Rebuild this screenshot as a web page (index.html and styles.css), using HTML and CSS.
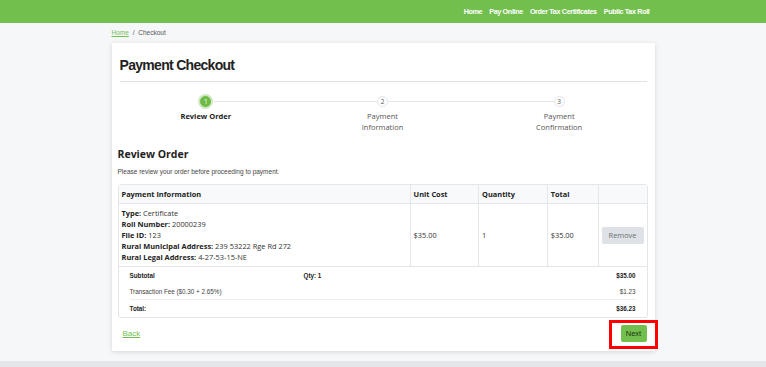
FILE: index.html
```html
<!DOCTYPE html>
<html lang="en">
<head>
  <meta charset="UTF-8" />
  <meta name="viewport" content="width=device-width, initial-scale=1.0"/>
  <title>Payment Checkout</title>
  <link rel="stylesheet" href="styles.css">
</head>
<body>

  <header class="topbar">
    <nav class="wrap topnav">
      <a href="#">Home</a>
      <a href="#">Pay Online</a>
      <a href="#">Order Tax Certificates</a>
      <a href="#">Public Tax Roll</a>
    </nav>
  </header>

  <main class="wrap">
    <div class="crumbs"><a href="#">Home</a> <span>/</span> Checkout</div>

    <section class="card">
      <h1>Payment Checkout</h1>

      <ol class="steps">
        <li class="step active"><span class="dot">1</span><span class="label">Review Order</span></li>
        <li class="step"><span class="dot">2</span><span class="label">Payment<br>Information</span></li>
        <li class="step"><span class="dot">3</span><span class="label">Payment<br>Confirmation</span></li>
      </ol>

      <h2>Review Order</h2>
      <p class="note">Please review your order before proceeding to payment.</p>

      <div class="order">
        <table class="items">
          <thead>
            <tr>
              <th class="col-info">Payment Information</th>
              <th class="col-cost">Unit Cost</th>
              <th class="col-qty">Quantity</th>
              <th class="col-total">Total</th>
              <th class="col-act"></th>
            </tr>
          </thead>
          <tbody>
            <tr>
              <td class="details">
                <b>Type:</b> Certificate<br>
                <b>Roll Number:</b> 20000239<br>
                <b>File ID:</b> 123<br>
                <b>Rural Municipal Address:</b> 239 53222 Rge Rd 272<br>
                <b>Rural Legal Address:</b> 4-27-53-15-NE
              </td>
              <td>$35.00</td>
              <td>1</td>
              <td>$35.00</td>
              <td><button class="remove">Remove</button></td>
            </tr>
          </tbody>
        </table>

        <div class="summary">
          <div class="sum-row strong"><span class="sum-name">Subtotal</span><span class="sum-qty">Qty: 1</span><span class="sum-val">$35.00</span></div>
          <div class="sum-row"><span class="sum-name">Transaction Fee ($0.30 + 2.65%)</span><span class="sum-val">$1.23</span></div>
          <div class="sum-row strong total"><span class="sum-name">Total:</span><span class="sum-val">$36.23</span></div>
        </div>
      </div>

      <div class="actions">
        <a href="#" class="back">Back</a>
        <button class="next">Next</button>
      </div>
    </section>
  </main>

  <footer class="foot"></footer>

</body>
</html>
```

FILE: styles.css
```css
body {
  margin: 0;
  background: #f6f7f9;
  font-family: 'Liberation Sans', Arial, sans-serif;
  color: #212529;
}
.wrap {
  width: 543px;
  margin: 0 auto;
}
.topbar {
  background: #72bf4e;
  height: 23px;
}
.topnav {
  display: flex;
  justify-content: flex-end;
  align-items: center;
  gap: 7px;
  height: 23px;
  padding-right: 5px;
  box-sizing: border-box;
}
.topnav a {
  color: #fff;
  text-decoration: none;
  font-weight: bold;
  font-size: 7.2px;
  letter-spacing: -0.35px;
}
.crumbs {
  font-size: 6.5px;
  line-height: 10px;
  margin: 5px 0 5px;
  color: #555;
}
.crumbs a {
  color: #72bf4e;
}
.crumbs span {
  margin: 0 2px;
}
.card {
  background: #fff;
  box-shadow: 0 1px 5px rgba(0, 0, 0, 0.13);
  padding: 14px 7px 9px 6px;
  margin-bottom: 10px;
}
h1 {
  margin: 0 1px 0 2px;
  font-size: 14px;
  line-height: 17px;
  letter-spacing: -0.7px;
  padding-bottom: 7px;
  border-bottom: 1px solid #dfe2e6;
  color: #222;
}
.steps {
  list-style: none;
  margin: 13px 0 0;
  padding: 0;
  display: grid;
  grid-template-columns: repeat(3, 1fr);
  font-family: 'Open Sans', sans-serif;
}
.step {
  position: relative;
  display: flex;
  flex-direction: column;
  align-items: center;
}
.step + .step::before {
  content: "";
  position: absolute;
  top: 6px;
  left: -50%;
  width: 100%;
  height: 1px;
  background: #e6e8eb;
  z-index: 0;
}
.dot {
  position: relative;
  z-index: 1;
  width: 11px;
  height: 11px;
  border-radius: 50%;
  background: #fff;
  border: 1px solid #e3e5e8;
  box-sizing: border-box;
  font-size: 6.5px;
  line-height: 9px;
  text-align: center;
  color: #555;
  margin-top: 1px;
}
.active .dot {
  background: #6cbc45;
  border-color: #6cbc45;
  color: #fff;
  box-shadow: 0 0 0 2px #cfe8c2;
}
.label {
  margin-top: 4px;
  font-size: 7.5px;
  line-height: 11px;
  text-align: center;
  color: #555;
}
.active .label {
  font-weight: bold;
  color: #222;
}
h2 {
  margin: 14px 0 0;
  font-size: 10.5px;
  line-height: 14px;
  font-family: 'Open Sans', sans-serif;
  color: #222;
}
.note {
  margin: 6px 0 0;
  font-size: 6.5px;
  line-height: 10px;
  color: #444;
}
.order {
  margin-top: 7px;
  border: 1px solid #e4e6e9;
  border-radius: 3px;
  font-family: 'Open Sans', sans-serif;
}
.items {
  width: 100%;
  border-collapse: collapse;
  font-size: 7.4px;
  color: #333;
}
.items th,
.items td {
  border-right: 1px solid #e4e6e9;
  text-align: left;
  padding: 0 3px;
}
.items th:last-child,
.items td:last-child {
  border-right: none;
}
.items th {
  background: #f8f9fa;
  height: 18px;
  font-weight: bold;
  border-bottom: 1px solid #e4e6e9;
  color: #222;
}
.items td {
  height: 62px;
  border-bottom: 1px solid #e4e6e9;
}
.col-info { width: 288px; }
.col-cost { width: 62px; }
.col-qty { width: 62px; }
.col-total { width: 44px; }
.details {
  line-height: 11px;
}
.details b {
  color: #222;
}
.remove {
  font-family: 'Open Sans', sans-serif;
  font-size: 7.4px;
  color: #6b7075;
  background: #dee1e5;
  border: none;
  border-radius: 2px;
  width: 42px;
  height: 17px;
  padding: 0;
}
.summary {
  padding: 0 11px;
  font-family: 'Liberation Sans', Arial, sans-serif;
  font-size: 6.3px;
  color: #444;
}
.sum-row {
  display: flex;
  align-items: center;
  height: 16px;
}
.sum-row.strong {
  font-weight: bold;
  color: #222;
}
.sum-row.total {
  height: 17px;
  border-top: 1px solid #eceef0;
}
.sum-name {
  width: 174px;
}
.sum-val {
  margin-left: auto;
}
.actions {
  display: flex;
  justify-content: space-between;
  align-items: center;
  margin-top: 7px;
  padding: 0 1px 0 5px;
}
.back {
  color: #72bf4e;
  font-size: 8px;
}
.next {
  position: relative;
  background: #72bf4e;
  color: #1d3314;
  border: none;
  border-radius: 2px;
  width: 26px;
  height: 17px;
  padding: 0;
  font-family: 'Liberation Sans', Arial, sans-serif;
  font-size: 7.5px;
}
.next::after {
  content: "";
  position: absolute;
  top: -5px;
  bottom: -7px;
  left: -12px;
  right: -11px;
  border: 3px solid #f00;
}
.foot {
  background: #e4e6ea;
  height: 7px;
}
```
